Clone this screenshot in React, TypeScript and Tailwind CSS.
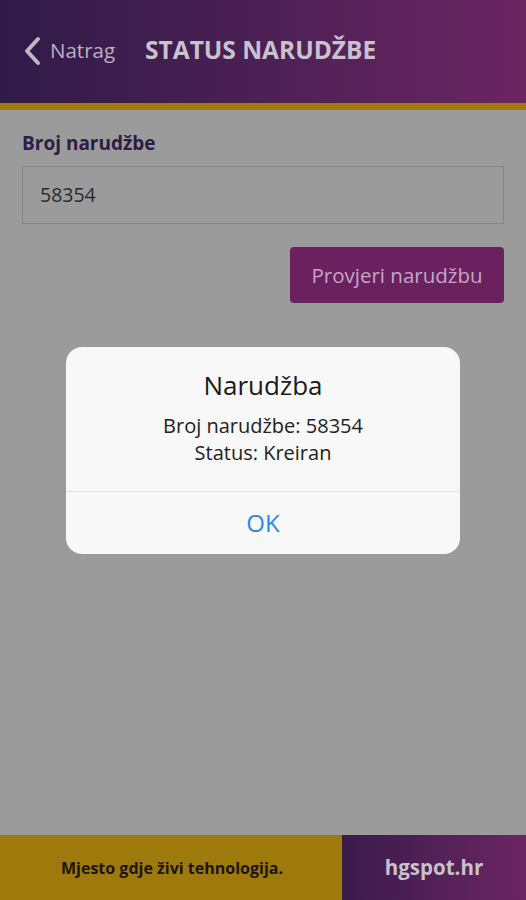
import React from 'react';

const font = { fontFamily: '"Open Sans", "Noto Sans", sans-serif' };

function App() {
  return (
    <div className="relative w-[526px] h-[900px] overflow-hidden bg-[#9b9b9b] flex flex-col" style={font}>
      {/* header */}
      <header className="h-[103px] shrink-0 bg-gradient-to-r from-[#2f1a48] to-[#6b2562] flex items-center pl-[22px] pb-[2px]">
        <svg width="20" height="30" viewBox="0 0 20 30" className="mr-[8px]">
          <path d="M16 3 L5 15 L16 27" fill="none" stroke="#c2b6c6" strokeWidth="4" strokeLinecap="round" strokeLinejoin="round" />
        </svg>
        <span className="text-[20.5px] text-[#bdaec4] leading-none">Natrag</span>
        <span className="ml-[30px] text-[24.5px] font-bold text-[#c9c1cb] leading-none">STATUS NARUDŽBE</span>
      </header>
      <div className="h-[7px] shrink-0 bg-[#a07a0a]" />

      {/* form */}
      <main className="flex-1 px-[22px] pt-[24px]">
        <label className="block text-[19px] font-bold text-[#2e1b48] leading-none">Broj narudžbe</label>
        <div className="mt-[13px] h-[58px] border border-[#868686] flex items-center px-[17px]">
          <span className="text-[19.5px] text-[#2a2a2a]">58354</span>
        </div>
        <div className="flex justify-end mt-[23px]">
          <button className="w-[214px] h-[56px] rounded-[4px] bg-[#6b2160] text-[20.5px] text-[#c5a6c4]">
            Provjeri narudžbu
          </button>
        </div>
      </main>

      {/* footer */}
      <footer className="h-[65px] shrink-0 flex">
        <div className="w-[342px] bg-[#9d7a0b] flex items-center justify-center pl-[2px]">
          <span className="text-[16px] font-bold text-[#1c1506]">Mjesto gdje živi tehnologija.</span>
        </div>
        <div className="flex-1 bg-gradient-to-r from-[#3a1b4c] to-[#6b2562] flex items-center justify-center">
          <span className="text-[20.5px] font-bold text-[#c9c1cb]">hgspot.hr</span>
        </div>
      </footer>

      {/* alert dialog */}
      <div className="absolute left-[66px] top-[347px] w-[394px] h-[207px] rounded-[16px] bg-[#f8f8f8] flex flex-col">
        <div className="flex-1 flex flex-col items-center pt-[21px]">
          <div className="text-[26px] text-[#1a1a1a] leading-[34px]">Narudžba</div>
          <div className="mt-[10px] text-[20px] text-[#222] leading-[27px] text-center">
            Broj narudžbe: 58354
            <br />
            Status: Kreiran
          </div>
        </div>
        <div className="h-[63px] border-t border-[#e2e2e2] flex items-center justify-center">
          <span className="text-[24px] text-[#2f84ea]">OK</span>
        </div>
      </div>
    </div>
  );
}

export default App;
